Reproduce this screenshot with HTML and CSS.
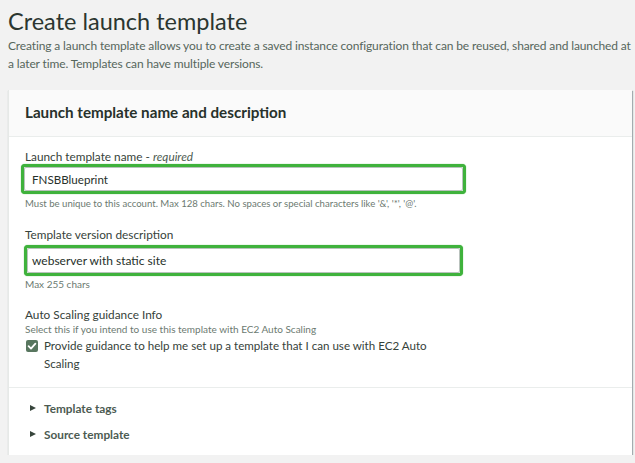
FILE: index.html
```html
<!DOCTYPE html>
<html lang="en">
<head>
<meta charset="utf-8">
<title>Create launch template</title>
<link rel="stylesheet" href="styles.css">
</head>
<body>
<main class="page">
  <h1 class="title">Create launch template</h1>
  <p class="intro">Creating a launch template allows you to create a saved instance configuration that can be reused, shared and launched at a later time. Templates can have multiple versions.</p>

  <section class="card">
    <header class="card-header">
      <h2 class="card-title">Launch template name and description</h2>
    </header>
    <div class="card-body">
      <div class="field">
        <div class="label">Launch template name - <em>required</em></div>
        <div class="highlight highlight-name"><div class="input">FNSBBlueprint</div></div>
        <div class="hint">Must be unique to this account. Max 128 chars. No spaces or special characters like '&amp;', '*', '@'.</div>
      </div>
      <div class="field">
        <div class="label">Template version description</div>
        <div class="highlight highlight-desc"><div class="input">webserver with static site</div></div>
        <div class="hint">Max 255 chars</div>
      </div>
      <div class="field field-last">
        <div class="label">Auto Scaling guidance <span class="info">Info</span></div>
        <div class="hint hint-sub">Select this if you intend to use this template with EC2 Auto Scaling</div>
        <div class="check-row">
          <span class="checkbox">
            <svg width="12" height="12" viewBox="0 0 12 12"><path d="M2.6 6.2 L5 8.6 L9.4 3.6" fill="none" stroke="#fff" stroke-width="1.8" stroke-linecap="round" stroke-linejoin="round"/></svg>
          </span>
          <span class="check-text">Provide guidance to help me set up a template that I can use with EC2 Auto Scaling</span>
        </div>
      </div>
    </div>
    <div class="expanders">
      <div class="expander"><span class="caret"></span>Template tags</div>
      <div class="expander"><span class="caret"></span>Source template</div>
    </div>
  </section>
</main>
</body>
</html>
```

FILE: styles.css
```css
html, body {
  margin: 0;
  padding: 0;
  background: #f2f2f2;
}

body {
  font-family: Lato, "Open Sans", Arial, sans-serif;
  color: #2f3a33;
}

.page {
  padding: 6px 3px 0 8px;
}

.title {
  margin: 0;
  font-size: 23.5px;
  line-height: 30px;
  font-weight: 400;
  color: #2b3630;
}

.intro {
  margin: 1px 0 0 0;
  font-size: 12px;
  letter-spacing: -0.13px;
  line-height: 18px;
  color: #56665c;
}

.card {
  margin-top: 17px;
  background: #fff;
  border-left: 1px solid #e6e9e7;
  box-shadow: 1px 1px 1px rgba(0, 28, 36, 0.3), 0 1px 1px rgba(0, 28, 36, 0.2);
}

.card-header {
  background: #fafafa;
  border-bottom: 1px solid #eaedec;
  padding: 12px 16px 13px;
}

.card-title {
  margin: 0;
  font-size: 15.2px;
  line-height: 21px;
  font-weight: 700;
  color: #27312b;
}

.card-body {
  padding: 12px 16px 14px;
  border-bottom: 1px solid #eaedec;
}

.field {
  margin-bottom: 17px;
}

.field-last {
  margin-bottom: 0;
}

.label {
  font-size: 11.8px;
  line-height: 16px;
  color: #36423a;
}

.label em {
  font-style: italic;
  color: #4b5a50;
}

.info {
  color: #36423a;
}

.highlight {
  box-sizing: border-box;
  height: 30px;
  border: 3px solid #3fb23c;
  border-radius: 4px;
  background: #fff;
  box-shadow: 0 0 1px #3fb23c;
}

.highlight-name {
  margin: -1px 0 0 -4px;
  width: 445px;
}

.highlight-desc {
  margin: 2px 0 0 -1px;
  width: 439px;
  height: 31px;
}

.input {
  box-sizing: border-box;
  height: 100%;
  border: 1px solid #b9c2bd;
  border-radius: 2px;
  padding: 0 0 0 7px;
  font-size: 11.6px;
  line-height: 23px;
  color: #26302a;
}

.highlight-desc .input {
  padding-left: 4px;
  font-size: 12px;
  line-height: 23px;
}

.hint {
  margin-top: 4px;
  font-size: 9.6px;
  line-height: 12px;
  color: #6c7a71;
}

.hint-sub {
  margin-top: 0;
  font-size: 10px;
}

.field:nth-child(2) .hint {
  margin-top: 2px;
  font-size: 10px;
}

.check-row {
  display: flex;
  align-items: flex-start;
  margin-top: 2px;
}

.checkbox {
  flex: none;
  width: 12px;
  height: 12px;
  margin: 3px 6px 0 1px;
  border-radius: 2px;
  background: #58765f;
  display: flex;
}

.check-text {
  width: 390px;
  font-size: 11.6px;
  line-height: 18px;
  color: #36423a;
}

.expanders {
  padding: 7px 16px 8px 21px;
}

.expander {
  display: flex;
  align-items: center;
  height: 26px;
  font-size: 11.8px;
  font-weight: 700;
  color: #4c5b52;
}

.caret {
  width: 0;
  height: 0;
  border-top: 3.5px solid transparent;
  border-bottom: 3.5px solid transparent;
  border-left: 6px solid #37453c;
  margin-right: 8px;
}
```
